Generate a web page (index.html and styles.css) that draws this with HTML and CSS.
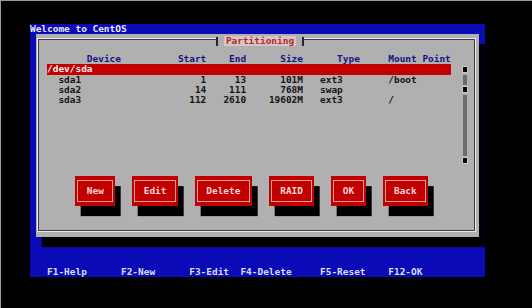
FILE: index.html
```html
<!DOCTYPE html>
<html>
<head>
<meta charset="utf-8">
<title>Welcome to CentOS</title>
<link rel="stylesheet" href="styles.css">
</head>
<body>
<div class="monitor">
  <div class="screen">
    <div class="welcome">Welcome to CentOS</div>
    <div class="dialog">
      <div class="frame">
        <div class="title"><span>Partitioning</span></div>
        <div class="row head">
          <span class="c-dev h-dev">Device</span>
          <span class="c-start">Start</span>
          <span class="c-end">End</span>
          <span class="c-size">Size</span>
          <span class="c-type h-type">Type</span>
          <span class="c-mount">Mount Point</span>
        </div>
        <div class="listbox">
          <div class="rows">
            <div class="row disk">/dev/sda</div>
            <div class="row">
              <span class="c-dev p-dev">sda1</span><span class="c-start">1</span><span class="c-end">13</span><span class="c-size">101M</span><span class="c-type">ext3</span><span class="c-mount">/boot</span>
            </div>
            <div class="row">
              <span class="c-dev p-dev">sda2</span><span class="c-start">14</span><span class="c-end">111</span><span class="c-size">768M</span><span class="c-type">swap</span><span class="c-mount"></span>
            </div>
            <div class="row">
              <span class="c-dev p-dev">sda3</span><span class="c-start">112</span><span class="c-end">2610</span><span class="c-size">19602M</span><span class="c-type">ext3</span><span class="c-mount">/</span>
            </div>
          </div>
          <div class="scrollbar">
            <span class="sb-cell sb-mark"></span>
            <span class="sb-cell sb-track"></span>
            <span class="sb-cell sb-mark"></span>
            <span class="sb-cell sb-track sb-long"></span>
            <span class="sb-cell sb-mark"></span>
          </div>
        </div>
        <div class="buttons">
          <div class="btn w7"><span class="btn-label">New</span></div>
          <div class="btn w8"><span class="btn-label">Edit</span></div>
          <div class="btn w10"><span class="btn-label">Delete</span></div>
          <div class="btn w8"><span class="btn-label">RAID</span></div>
          <div class="btn w6"><span class="btn-label">OK</span></div>
          <div class="btn w8"><span class="btn-label">Back</span></div>
        </div>
      </div>
    </div>
    <div class="help">
      <span>F1-Help</span>
      <span>F2-New</span>
      <span>F3-Edit</span>
      <span>F4-Delete</span>
      <span>F5-Reset</span>
      <span>F12-OK</span>
    </div>
  </div>
</div>
</body>
</html>
```
FILE: styles.css
```css
:root {
  --cw: 5.6875px;
  --rh: 10.12px;
  --blue: #0a0ab6;
  --gray: #b0b0b0;
  --red: #c20000;
}

* { box-sizing: border-box; }

html, body {
  margin: 0;
  padding: 0;
  background: #000;
}

body {
  width: 532px;
  height: 308px;
  overflow: hidden;
  font-family: "DejaVu Sans Mono", "Liberation Mono", monospace;
  font-weight: bold;
  font-size: 9.45px;
  line-height: var(--rh);
  border-top: 1px solid #9a9a9a;
  border-left: 1px solid #9a9a9a;
}

.monitor {
  padding: 23px 0 0 29px;
}

.screen {
  width: 455px;
  height: 253px;
  background: var(--blue);
  display: flex;
  flex-direction: column;
}

.welcome {
  height: var(--rh);
  color: #e8e8f8;
  white-space: pre;
}

.dialog {
  margin-left: var(--cw);
  width: calc(var(--cw) * 78);
  height: calc(var(--rh) * 20);
  background: var(--gray);
  box-shadow: var(--cw) var(--rh) 0 #000;
  padding: 5px 4px 6px 2.3px;
}

.frame {
  position: relative;
  height: 100%;
  border: 1px solid #3e3e3e;
  box-shadow: 0 0 0 1px #ececec;
  padding-top: 14.25px;
  padding-left: 8.07px;
}

.title {
  position: absolute;
  left: 177px;
  top: -3px;
  width: 88px;
  height: 9px;
  background: var(--gray);
  border-left: 2px solid #262626;
  border-right: 2px solid #262626;
  display: flex;
  justify-content: center;
  align-items: center;
}

.title span {
  background: #d2c6c6;
  color: #bf2626;
  padding: 0 2px;
  line-height: 10px;
  height: 10px;
  margin-top: -1px;
}

.row {
  display: grid;
  grid-template-columns:
    calc(var(--cw) * 16) calc(var(--cw) * 12) calc(var(--cw) * 7)
    calc(var(--cw) * 10) calc(var(--cw) * 15) calc(var(--cw) * 11);
  height: var(--rh);
  width: calc(var(--cw) * 71);
  white-space: pre;
  color: #141414;
}

.head { color: #14147e; }

.c-start, .c-end, .c-size { text-align: right; }
.c-type { padding-left: calc(var(--cw) * 3); }
.h-type { padding-left: calc(var(--cw) * 6); }
.h-dev { padding-left: calc(var(--cw) * 7); }
.p-dev { padding-left: calc(var(--cw) * 2); }

.row.disk {
  display: block;
  background: var(--red);
  color: #f4f4f4;
}

.listbox {
  display: flex;
  gap: calc(var(--cw) * 2);
  height: calc(var(--rh) * 10);
}

.rows {
  width: calc(var(--cw) * 71);
}

.scrollbar {
  width: var(--cw);
  display: flex;
  flex-direction: column;
}

.sb-cell {
  display: flex;
  justify-content: center;
  align-items: center;
  height: var(--rh);
}

.sb-mark::before {
  content: "";
  width: 4px;
  height: 5px;
  background: #050505;
  box-shadow: 0 0 0 1px #c8c8c8;
}

.sb-track::before {
  content: "";
  width: 4px;
  height: 100%;
  background: #6c6c6c;
}

.sb-long { height: calc(var(--rh) * 6); }

.buttons {
  display: flex;
  gap: calc(var(--cw) * 3);
  margin-top: var(--rh);
  margin-left: calc(var(--cw) * 5);
}

.btn {
  height: calc(var(--rh) * 3);
  background: var(--red);
  box-shadow: var(--cw) var(--rh) 0 #000;
  padding: 4px 2px 4px 2px;
}

.w6 { width: calc(var(--cw) * 6); }
.w7 { width: calc(var(--cw) * 7); }
.w8 { width: calc(var(--cw) * 8); }
.w10 { width: calc(var(--cw) * 10); }

.btn-label {
  height: 100%;
  display: flex;
  align-items: center;
  justify-content: center;
  border: 1px solid #e89c9c;
  color: #f6d6d6;
}

.help {
  margin-top: auto;
  height: var(--rh);
  display: grid;
  grid-template-columns:
    calc(var(--cw) * 13) calc(var(--cw) * 12) calc(var(--cw) * 9)
    calc(var(--cw) * 14) calc(var(--cw) * 12) auto;
  padding-left: calc(var(--cw) * 3);
  color: #dcdcfa;
  white-space: pre;
}
```
